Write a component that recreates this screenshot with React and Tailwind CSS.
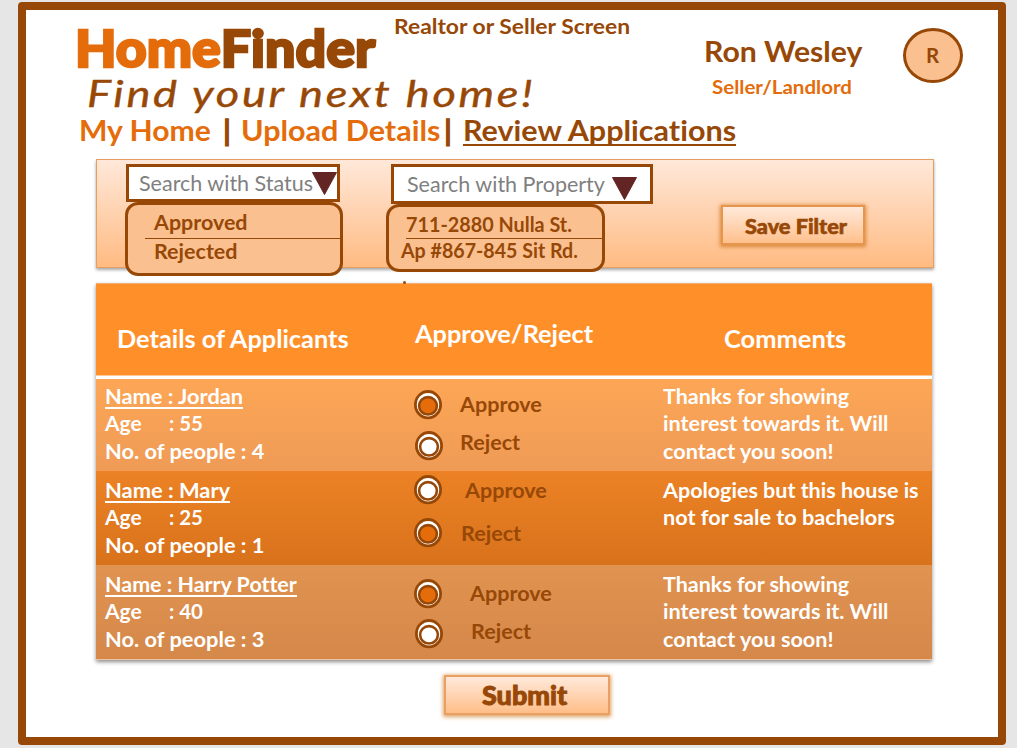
import React, { useLayoutEffect, useRef } from "react";

// A single line of text condensed or widened to the width of its box.
function Line({ className = "", textClass = "", children }) {
  const box = useRef(null);
  const text = useRef(null);
  useLayoutEffect(() => {
    const ratio = box.current.clientWidth / text.current.offsetWidth;
    text.current.style.transform = `scaleX(${ratio})`;
  }, []);
  return (
    <div ref={box} className={`shrink-0 leading-none ${className}`}>
      <span ref={text} className={`block w-max origin-left whitespace-pre ${textClass}`}>
        {children}
      </span>
    </div>
  );
}

function Radio({ checked, className = "" }) {
  return (
    <svg className={`h-[30px] w-[28px] shrink-0 ${className}`} viewBox="0 0 28 30">
      <ellipse cx="14" cy="14.7" rx="12.6" ry="13.2" fill="#fff" stroke="#974807" strokeWidth="2.8" />
      <ellipse cx="14" cy="15.8" rx="8.9" ry="8.7" fill={checked ? "#e46c0a" : "#fff"} stroke="#974807" strokeWidth="2.6" />
    </svg>
  );
}

function Triangle({ className = "" }) {
  return (
    <svg className={`h-[23px] w-[25px] shrink-0 ${className}`} viewBox="0 0 25 23">
      <path d="M0.5 0.5H24.5L12.5 22.5Z" fill="#632523" stroke="#632523" strokeLinejoin="round" />
    </svg>
  );
}

function Divider({ className = "" }) {
  return <span className={`w-[8px] text-center leading-none [-webkit-text-stroke:1.2px] ${className}`}>|</span>;
}

const rows = [
  {
    bg: "h-[92px] pt-[6px] bg-linear-to-b from-[#fda656] to-[#ef9b56]",
    lift: "-mt-[5px]",
    name: "Jordan", nameW: "w-[138px]", age: "55", people: "4",
    approve: { on: true, radio: "mt-[10px] ml-[11px]", label: "mt-[14px] ml-[18px]" },
    reject: { on: false, radio: "mt-[11px] ml-[12px]", label: "mt-[12px] ml-[17px]" },
    comments: [["Thanks for showing", "w-[186px]"], ["interest towards it. Will", "w-[225px]"], ["contact you soon!", "w-[171px]"]],
  },
  {
    bg: "h-[94px] pt-[8px] bg-linear-to-b from-[#ec8225] to-[#d8721b]",
    lift: "-mt-[8px]",
    name: "Mary", nameW: "w-[125px]", age: "25", people: "1",
    approve: { on: false, radio: "mt-[4px] ml-[11px]", label: "mt-[9px] ml-[23px]" },
    reject: { on: true, radio: "mt-[13px] ml-[11px]", label: "mt-[18px] ml-[19px]" },
    comments: [["Apologies but this house is", "w-[256px]"], ["not for sale to bachelors", "w-[232px]"]],
  },
  {
    bg: "h-[94px] pt-[8px] bg-linear-to-b from-[#e19350] to-[#d4884a]",
    lift: "-mt-[8px]",
    name: "Harry Potter", nameW: "w-[192px]", age: "40", people: "3",
    approve: { on: true, radio: "mt-[14px] ml-[11px]", label: "mt-[18px] ml-[28px]" },
    reject: { on: false, radio: "mt-[10px] ml-[12px]", label: "mt-[12px] ml-[28px]" },
    comments: [["Thanks for showing", "w-[186px]"], ["interest towards it. Will", "w-[225px]"], ["contact you soon!", "w-[171px]"]],
  },
];

function Choice({ choice, text, width }) {
  return (
    <div className="flex items-start">
      <Radio checked={choice.on} className={choice.radio} />
      <Line className={`text-[20.5px] text-[#974807] ${width} ${choice.label}`}>{text}</Line>
    </div>
  );
}

function ApplicantRow({ row }) {
  return (
    <div className={`flex ${row.bg}`}>
      <div className="w-[307px] pl-[9px] text-[21px]">
        <div className="h-[27px]">
          <div className={`h-[24px] border-b-2 border-white ${row.nameW}`}>
            <Line>{`Name : ${row.name}`}</Line>
          </div>
        </div>
        <div className="flex h-[28px]">
          <Line className="w-[37px]">Age</Line>
          <Line className="ml-[27px] w-[34px]">{`: ${row.age}`}</Line>
        </div>
        <Line className="w-[159px]">{`No. of people : ${row.people}`}</Line>
      </div>
      <div className={`w-[260px] ${row.lift}`}>
        <Choice choice={row.approve} text="Approve" width="w-[82px]" />
        <Choice choice={row.reject} text="Reject" width="w-[60px]" />
      </div>
      <div className="text-[21px]">
        {row.comments.map(([text, width], i) => (
          <div key={text} className={i === 0 ? "h-[27px]" : "h-[28px]"}>
            <Line className={width}>{text}</Line>
          </div>
        ))}
      </div>
    </div>
  );
}

export default function App() {
  return (
    <div className="h-[748px] w-[1017px] overflow-hidden bg-[#e6e6e6] pt-[2px] pl-[18px] font-['Lato','Liberation_Sans',sans-serif] font-bold text-[#974807] [font-variant-ligatures:none]">
      <div className="h-[743px] w-[988px] rounded-[4px] border-8 border-[#974807] bg-white">
        <header>
          <div className="flex h-[106px] items-start pl-[52px]">
            <div className="w-[627px] pt-[12px]">
              <div className="flex h-[53px]">
                <Line className="-ml-[3px] w-[300px] text-[51px] font-black" textClass="[-webkit-text-stroke:2.4px]">
                  <span className="inline-block leading-none text-[#e46c0a]">Home</span>
                  <span className="inline-block leading-none">Finder</span>
                </Line>
                <Line className="-mt-[6px] ml-[19px] w-[236px] text-[21.5px]">Realtor or Seller Screen</Line>
              </div>
              <Line className="ml-[9px] w-[448px] text-[36px] font-normal italic" textClass="tracking-[0.06em] [-webkit-text-stroke:0.4px]">
                Find your next home!
              </Line>
            </div>
            <div className="mt-[27px] w-[158px] shrink-0 -ml-px">
              <Line className="text-[28.5px]">Ron Wesley</Line>
              <Line className="mt-[11px] ml-[8px] w-[140px] text-[19.5px] text-[#e46c0a]">Seller/Landlord</Line>
            </div>
            <div className="mt-[18px] ml-[41px] flex h-[55px] w-[60px] shrink-0 items-center justify-center rounded-[50%] border-[3px] border-[#974807] bg-[#fac090] text-[20.5px]">
              <Line className="-mt-px -ml-px w-[13px]">R</Line>
            </div>
          </div>
          <nav className="flex h-[43px] pl-[53px] text-[28.5px]">
            <Line className="w-[132px] text-[#e46c0a]">My Home</Line>
            <Divider className="ml-[12px]" />
            <Line className="ml-[10px] w-[199px] text-[#e46c0a]">Upload Details</Line>
            <Divider className="ml-[4px]" />
            <div className="ml-[11px] h-[30px] w-[273px] border-b-2 border-[#974807]">
              <Line>Review Applications</Line>
            </div>
          </nav>
        </header>

        <section className="relative z-10 ml-[70px] flex h-[109px] w-[838px] items-start border border-[#e3a062] bg-linear-to-b from-[#ffe8d9] to-[#ffbb82] shadow-[0_2px_3px_rgba(0,0,0,0.35)]">
          <div className="relative mt-[4px] ml-[29px] flex h-[38px] w-[214px] items-start border-3 border-[#974807] bg-white text-[21.5px] font-normal text-[#7f7f7f]">
            <Line className="mt-[6px] ml-[10px] w-[174px]">Search with Status</Line>
            <Triangle className="mt-[5px] -ml-px" />
            <div className="absolute top-[35px] -left-[4px] h-[74px] w-[218px] rounded-[13px] border-3 border-[#974807] bg-[#fac090] pl-[17px] text-[21px] font-bold text-[#974807]">
              <div className="h-[34px] border-b border-[#974807] pt-[6px] pl-[9px]">
                <Line className="w-[94px]">Approved</Line>
              </div>
              <Line className="mt-px ml-[9px] w-[84px]">Rejected</Line>
            </div>
          </div>

          <div className="relative mt-[4px] ml-[51px] flex h-[40px] w-[262px] items-start border-3 border-[#974807] bg-white text-[21.5px] font-normal text-[#7f7f7f]">
            <Line className="mt-[7px] ml-[13px] w-[198px]">Search with Property</Line>
            <Triangle className="mt-[10px] ml-[7px]" />
            <div className="absolute top-[37px] -left-[8px] h-[68px] w-[219px] rounded-[13px] border-3 border-[#974807] bg-[#fac090] text-[20.5px] font-bold text-[#974807]">
              <div className="ml-[17px] h-[32px] border-b border-[#974807] pt-[7px]">
                <Line className="w-[166px]">711-2880 Nulla St.</Line>
              </div>
              <Line className="mt-px ml-[12px] w-[177px]">Ap #867-845 Sit Rd.</Line>
            </div>
          </div>

          <button className="mt-[45px] ml-[68px] h-[40px] w-[144px] border-2 border-[#e6954c] bg-linear-to-b from-[#ffe9da] to-[#ffc08c] pt-px pl-[22px] text-left text-[20px] font-black shadow-[0_1px_4px_1px_#d98a3c]">
            <Line className="w-[102px]" textClass="[-webkit-text-stroke:0.6px]">Save Filter</Line>
          </button>
        </section>

        <div className="relative mt-[15px] ml-[70px] w-[836px] border-t border-[#f5b07a] text-white shadow-[0_2px_4px_rgba(0,0,0,0.45)]">
          <span className="absolute -top-[3px] left-[307px] h-[3px] w-[3px] rounded-full bg-[#974807]" />
          <div className="flex h-[92px] items-start border-b border-[#ffc796] bg-[#ff9029] text-[24px]">
            <Line className="mt-[43px] ml-[21px] w-[232px]">Details of Applicants</Line>
            <Line className="mt-[38px] ml-[66px] w-[178px]">Approve/Reject</Line>
            <Line className="mt-[43px] ml-[131px] w-[122px]">Comments</Line>
          </div>
          <div className="h-[3px] bg-white" />
          {rows.map((row) => (
            <ApplicantRow key={row.name} row={row} />
          ))}
          <div className="h-px bg-[#efc4a5]" />
        </div>

        <button className="mt-[15px] ml-[418px] block h-[40px] w-[166px] border-2 border-[#e9a060] bg-linear-to-b from-[#ffe9da] to-[#ffbe88] pl-[36px] text-left text-[26px] font-black shadow-[0_1px_4px_1px_#dda266]">
          <Line className="w-[85px]" textClass="[-webkit-text-stroke:0.9px]">Submit</Line>
        </button>
      </div>
    </div>
  );
}
